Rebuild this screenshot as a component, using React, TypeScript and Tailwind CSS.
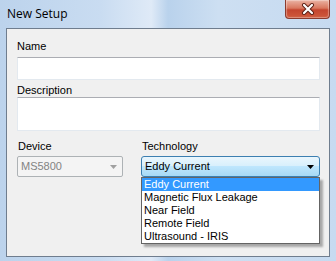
// ─── NewSetupDialog ──────────────────────────────────────────────────────────
// Windows 7 style "New Setup" dialog with an open Technology combo box.

const TECHNOLOGIES = [
  "Eddy Current",
  "Magnetic Flux Leakage",
  "Near Field",
  "Remote Field",
  "Ultrasound - IRIS",
];

function Arrow({ color }: { color: string }) {
  return (
    <svg width="7" height="4" viewBox="0 0 7 4" className="block">
      <path d="M0 0 H7 L3.5 4 Z" fill={color} />
    </svg>
  );
}

export default function App() {
  const font = { fontFamily: '"Liberation Sans", Arial, sans-serif' };

  return (
    <div
      className="w-[336px] h-[261px] flex flex-col overflow-hidden bg-[linear-gradient(90deg,#bcd3ec_0%,#c9dcf1_30%,#dfeaf7_45%,#b9d2ec_50%,#cddff2_65%,#c6daf0_100%)]"
      style={font}
    >
      {/* ── Title bar ─────────────────────────────────────────────────────── */}
      <div className="h-[28px] shrink-0 flex items-start justify-between pl-[7px] pr-[6px]">
        <span
          className="mt-[6px] text-[12px] leading-[16px] text-black"
          style={{ fontFamily: '"Segoe UI", "Open Sans", sans-serif' }}
        >
          New Setup
        </span>
        {/* Close button */}
        <div className="w-[45px] h-[19px] rounded-b-[4px] border border-t-0 border-[#8b3b2e] bg-[linear-gradient(180deg,#eab2a3_0%,#d9785f_45%,#c4452e_55%,#cf5a3c_100%)] flex items-center justify-center shadow-[inset_0_0_1px_1px_rgba(255,255,255,0.35)]">
          <svg width="14" height="12" viewBox="0 0 14 12">
            <path d="M3 2 L11 10 M11 2 L3 10" stroke="#5a1f14" strokeWidth="4" strokeLinecap="round" />
            <path d="M3 2 L11 10 M11 2 L3 10" stroke="#ffffff" strokeWidth="2.2" strokeLinecap="round" />
          </svg>
        </div>
      </div>

      {/* ── Client area ───────────────────────────────────────────────────── */}
      <div className="mx-[6px] h-[229px] shrink-0 border border-[#6f7d8e] bg-[#f0f0f0] pl-[10px] text-[11px] leading-[13px] text-black">
        <div className="mt-[11px] h-[13px]">Name</div>
        <div className="mt-[4px] w-[303px] h-[23px] bg-white border border-[#e3e9ef] border-t-[#abadb3]" />

        <div className="mt-[4px] h-[13px]">Description</div>
        <div className="w-[303px] h-[34px] bg-white border border-[#e3e9ef] border-t-[#abadb3]" />

        {/* ── Device / Technology ──────────────────────────────────────────── */}
        <div className="mt-[9px] flex gap-[18px]">
          <div className="w-[106px]">
            <div className="h-[13px] pl-[1px]">Device</div>
            <div className="mt-[3px] h-[21px] rounded-[2px] border border-[#adb2b5] bg-[#f4f4f4] flex items-center justify-between pl-[3px] pr-[5px] text-[#838383]">
              <span>MS5800</span>
              <Arrow color="#a0a0a0" />
            </div>
          </div>

          <div className="w-[179px] relative">
            <div className="h-[13px] pl-[1px]">Technology</div>
            <div className="mt-[3px] h-[21px] rounded-[3px] border border-[#3c7fb1] bg-[linear-gradient(180deg,#eaf6fd_0%,#d9f0fc_45%,#bee6fd_50%,#a7d9f5_100%)] flex items-center justify-between pl-[3px] pr-[5px]">
              <span>Eddy Current</span>
              <Arrow color="#000000" />
            </div>

            {/* Dropdown list */}
            <div className="absolute left-0 top-full w-[179px] bg-white border border-[#646464] shadow-[3px_3px_2px_rgba(0,0,0,0.3)] z-10">
              {TECHNOLOGIES.map((t, i) => (
                <div
                  key={t}
                  className={`h-[13px] pl-[2px] whitespace-nowrap ${
                    i === 0 ? "bg-[#3399ff] text-white" : "text-black"
                  }`}
                >
                  {t}
                </div>
              ))}
            </div>
          </div>
        </div>
      </div>
    </div>
  );
}
